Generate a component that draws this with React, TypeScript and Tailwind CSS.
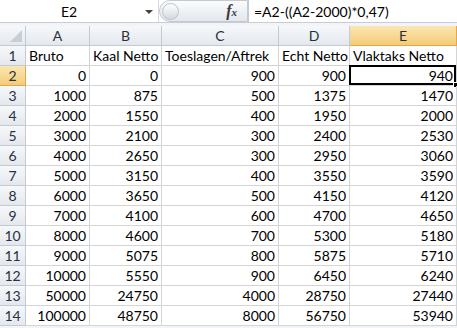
import React from 'react';

type Row = [number, number | string, number | string, number | string, number | string, number | string];

const rows: Row[] = [
  [1, 'Bruto', 'Kaal Netto', 'Toeslagen/Aftrek', 'Echt Netto', 'Vlaktaks Netto'],
  [2, 0, 0, 900, 900, 940],
  [3, 1000, 875, 500, 1375, 1470],
  [4, 2000, 1550, 400, 1950, 2000],
  [5, 3000, 2100, 300, 2400, 2530],
  [6, 4000, 2650, 300, 2950, 3060],
  [7, 5000, 3150, 400, 3550, 3590],
  [8, 6000, 3650, 500, 4150, 4120],
  [9, 7000, 4100, 600, 4700, 4650],
  [10, 8000, 4600, 700, 5300, 5180],
  [11, 9000, 5075, 800, 5875, 5710],
  [12, 10000, 5550, 900, 6450, 6240],
  [13, 50000, 24750, 4000, 28750, 27440],
  [14, 100000, 48750, 8000, 56750, 53940],
];

const cols = ['A', 'B', 'C', 'D', 'E'];

const FormulaBar = () => (
  <div className="flex h-[23px] border-b border-[#c6cdd6] bg-white">
    <div className="relative flex w-[159px] items-center justify-center border-r border-[#d5dbe3] pr-[20px] text-[14px] text-black">
      E2
      <span className="absolute right-[5px] top-[10px] h-0 w-0 border-l-[4px] border-r-[4px] border-t-[4px] border-l-transparent border-r-transparent border-t-[#444]" />
    </div>
    <div className="flex w-[89px] items-center rounded-l-full border border-[#c3cad3] bg-gradient-to-b from-[#fbfcfd] to-[#e3e7ec]">
      <div className="ml-[2px] h-[17px] w-[17px] rounded-full border border-[#b9c0c9] bg-gradient-to-b from-[#ffffff] to-[#d4d9df]" />
      <span className="ml-auto mr-[10px] font-['Liberation_Serif',serif] text-[16px] font-bold italic text-[#3a3a3a]">
        f<span className="text-[11px]">x</span>
      </span>
    </div>
    <div className="flex flex-1 items-center border-l border-[#c3cad3] pl-[5px] text-[14px] text-black">
      =A2-((A2-2000)*0,47)
    </div>
  </div>
);

const headerCls =
  'flex items-center justify-center border-b border-r border-[#c2cad4] bg-gradient-to-b from-[#f6f8fa] to-[#e4e8ee] text-[14px] text-[#27313c]';
const activeHeaderCls =
  'flex items-center justify-center border-b border-r border-[#e2a74a] bg-gradient-to-b from-[#fbe6b2] to-[#f4cc77] text-[14px] text-[#27313c]';

export default function App() {
  return (
    <div className="h-[328px] w-[457px] overflow-hidden bg-[#f2f4f7] font-['Lato',sans-serif]">
      <FormulaBar />
      <div className="h-[3px]" />
      <div className="grid grid-cols-[26px_64px_72px_117px_71px_107px] grid-rows-[20px] auto-rows-[20px] bg-white">
        <div className="relative border-b border-r border-[#c2cad4] bg-gradient-to-b from-[#f6f8fa] to-[#e4e8ee]">
          <span className="absolute bottom-[3px] right-[3px] h-0 w-0 border-b-[12px] border-l-[12px] border-b-[#c8ced6] border-l-transparent" />
        </div>
        {cols.map((c) => (
          <div key={c} className={c === 'E' ? activeHeaderCls : headerCls}>
            {c}
          </div>
        ))}
        {rows.map((r) => {
          const [n, ...cells] = r;
          return (
            <React.Fragment key={n}>
              <div className={n === 2 ? activeHeaderCls : headerCls}>{n}</div>
              {cells.map((v, i) => {
                const isNum = typeof v === 'number';
                const selected = n === 2 && i === 4;
                return (
                  <div
                    key={i}
                    className={`relative flex items-center overflow-visible whitespace-nowrap border-b border-r border-[#d4d4d4] px-[3px] text-[14px] text-black ${
                      isNum ? 'justify-end' : 'justify-start'
                    }`}
                  >
                    {v}
                    {selected && (
                      <>
                        <span className="pointer-events-none absolute -left-[1px] -top-[1px] bottom-0 right-0 border-2 border-black" />
                        <span className="absolute -bottom-[3px] -right-[3px] h-[6px] w-[6px] border border-white bg-black" />
                      </>
                    )}
                  </div>
                );
              })}
            </React.Fragment>
          );
        })}
      </div>
    </div>
  );
}
